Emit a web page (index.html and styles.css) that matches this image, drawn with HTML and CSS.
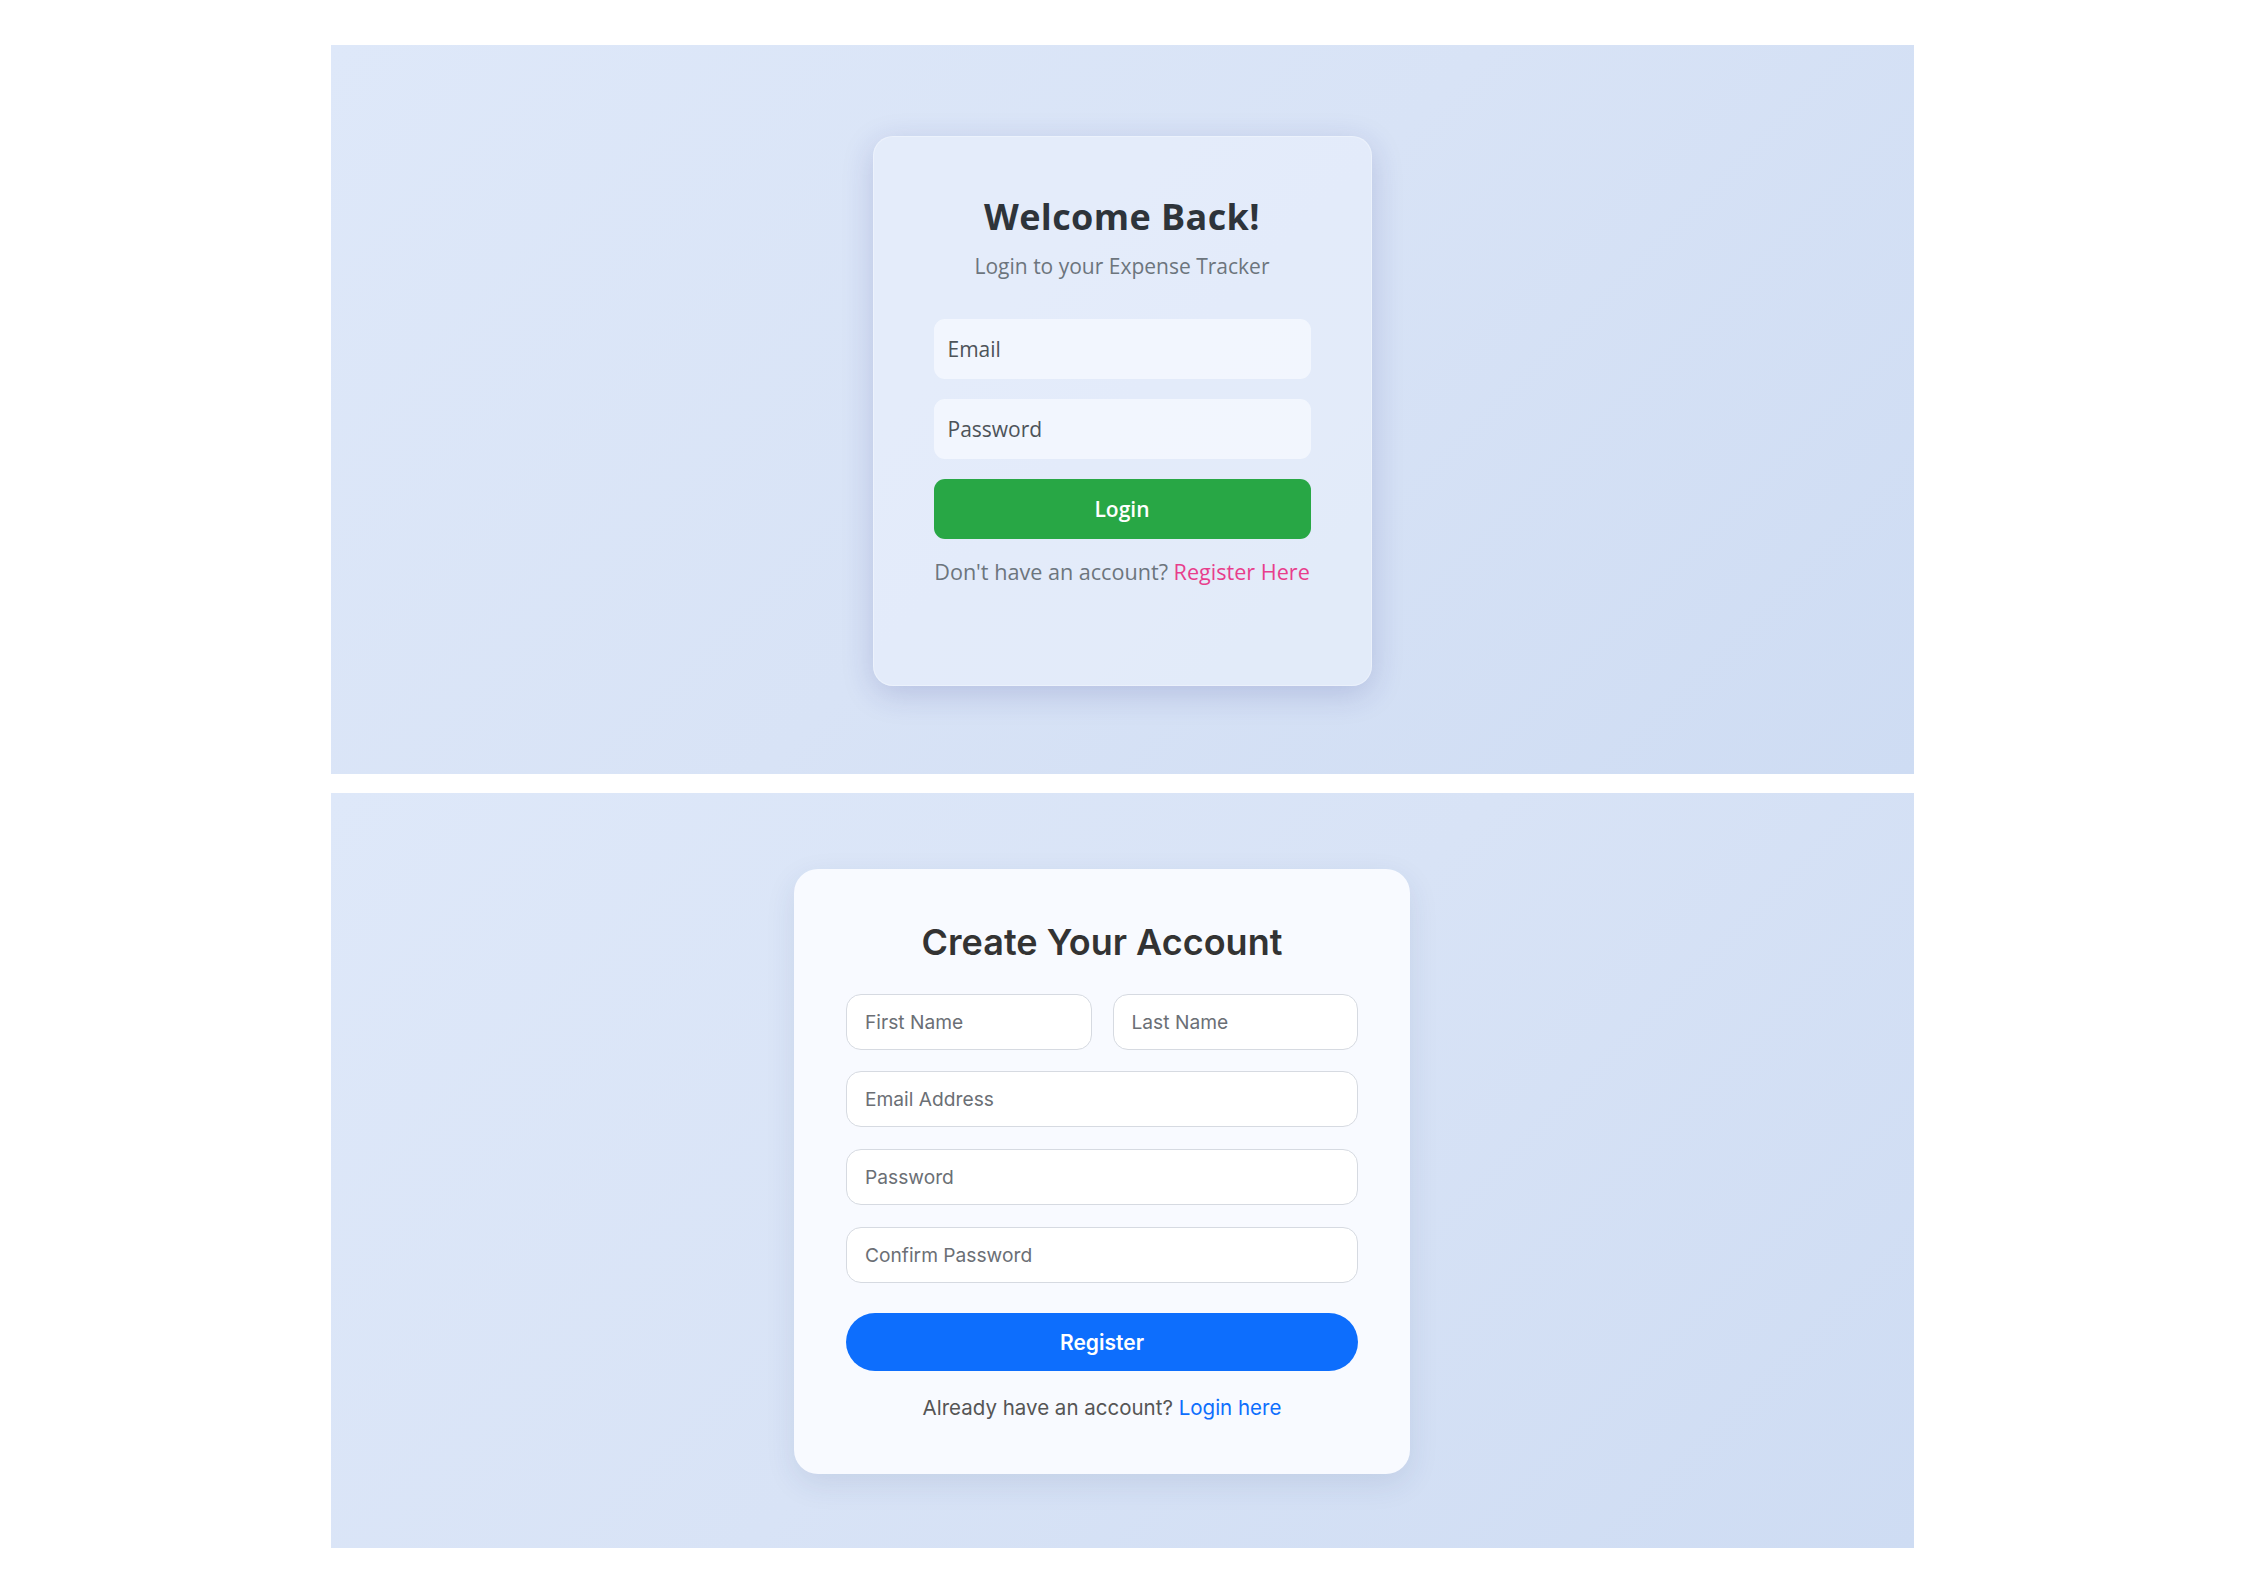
FILE: index.html
```html
<!DOCTYPE html>
<html lang="en">
<head>
<meta charset="utf-8">
<title>Expense Tracker - Auth</title>
<link rel="stylesheet" href="styles.css">
</head>
<body>
<main class="page">
  <section class="panel panel-login">
    <div class="login-card">
      <h1 class="login-title">Welcome Back!</h1>
      <p class="login-subtitle">Login to your Expense Tracker</p>
      <form class="login-form">
        <div class="login-input">Email</div>
        <div class="login-input">Password</div>
        <button type="button" class="login-btn">Login</button>
      </form>
      <p class="login-footer">Don't have an account? <a class="login-link">Register Here</a></p>
    </div>
  </section>
  <section class="panel panel-register">
    <div class="reg-card">
      <h2 class="reg-title">Create Your Account</h2>
      <form class="reg-form">
        <div class="reg-row">
          <div class="reg-input">First Name</div>
          <div class="reg-input">Last Name</div>
        </div>
        <div class="reg-input">Email Address</div>
        <div class="reg-input">Password</div>
        <div class="reg-input">Confirm Password</div>
        <button type="button" class="reg-btn">Register</button>
      </form>
      <p class="reg-footer">Already have an account? <a class="reg-link">Login here</a></p>
    </div>
  </section>
</main>
</body>
</html>
```
FILE: styles.css
```css
* { box-sizing: border-box; }
html, body { margin: 0; padding: 0; background: #ffffff; }
body { font-family: "Open Sans", sans-serif; }

.page {
  width: 1583px;
  margin: 45px auto 0;
  display: flex;
  flex-direction: column;
  gap: 19px;
}

.panel {
  display: flex;
  align-items: center;
  justify-content: center;
  background: linear-gradient(135deg, #dee8f9 0%, #d8e3f6 50%, #cedcf3 100%);
}
.panel-login { height: 729px; padding-top: 3px; padding-right: 1px; }
.panel-register { height: 755px; padding-right: 41px; padding-top: 1px; }

/* ---------- Login card ---------- */
.login-card {
  width: 499px;
  height: 550px;
  padding: 58px 60px 0;
  border-radius: 20px;
  background: rgba(232, 239, 251, 0.72);
  border: 1px solid rgba(255, 255, 255, 0.3);
  box-shadow: 0 8px 32px rgba(31, 38, 135, 0.18);
  text-align: center;
  font-family: "Open Sans", sans-serif;
}
.login-title {
  margin: 0;
  font-size: 36px;
  line-height: 44px;
  font-weight: 700;
  letter-spacing: 0.4px;
  color: #2e343a;
}
.login-subtitle {
  margin: 12px 0 0;
  font-size: 21px;
  line-height: 30px;
  color: #6c757d;
}
.login-form {
  margin-top: 38px;
  display: flex;
  flex-direction: column;
  gap: 20px;
}
.login-input {
  height: 60px;
  border-radius: 11px;
  background: rgba(245, 248, 254, 0.85);
  padding: 0 14px;
  display: flex;
  align-items: center;
  font-size: 21px;
  color: #4d5359;
  text-align: left;
}
.login-btn {
  height: 60px;
  border: none;
  border-radius: 11px;
  background: #28a745;
  color: #ffffff;
  font-family: "Open Sans", sans-serif;
  font-size: 21px;
  font-weight: 600;
}
.login-footer {
  margin: 18px 0 0;
  font-size: 21.6px;
  line-height: 30px;
  color: #6c757d;
}
.login-link { color: #e83e8c; text-decoration: none; }

/* ---------- Register card ---------- */
.reg-card {
  width: 616px;
  height: 605px;
  padding: 52px 52px 0;
  border-radius: 24px;
  background: #f8faff;
  box-shadow: 0 10px 30px rgba(40, 60, 110, 0.1);
  text-align: center;
  font-family: "Inter", sans-serif;
}
.reg-title {
  margin: 0;
  font-size: 36px;
  line-height: 42px;
  font-weight: 600;
  color: #333333;
}
.reg-form {
  margin-top: 31px;
  display: flex;
  flex-direction: column;
  gap: 21.7px;
}
.reg-row {
  display: grid;
  grid-template-columns: 1fr 1fr;
  gap: 21px;
}
.reg-input {
  height: 56px;
  border: 1px solid #d6dae1;
  border-radius: 15px;
  background: #ffffff;
  padding: 0 18px;
  display: flex;
  align-items: center;
  font-size: 19.2px;
  color: #6b6f75;
  text-align: left;
}
.reg-btn {
  margin-top: 9px;
  height: 58px;
  border: none;
  border-radius: 29px;
  background: #0d6efd;
  color: #ffffff;
  font-family: "Inter", sans-serif;
  font-size: 21px;
  font-weight: 600;
}
.reg-footer {
  margin: 22px 0 0;
  font-size: 20.5px;
  line-height: 30px;
  color: #555555;
}
.reg-link { color: #0d6efd; text-decoration: none; }
```
